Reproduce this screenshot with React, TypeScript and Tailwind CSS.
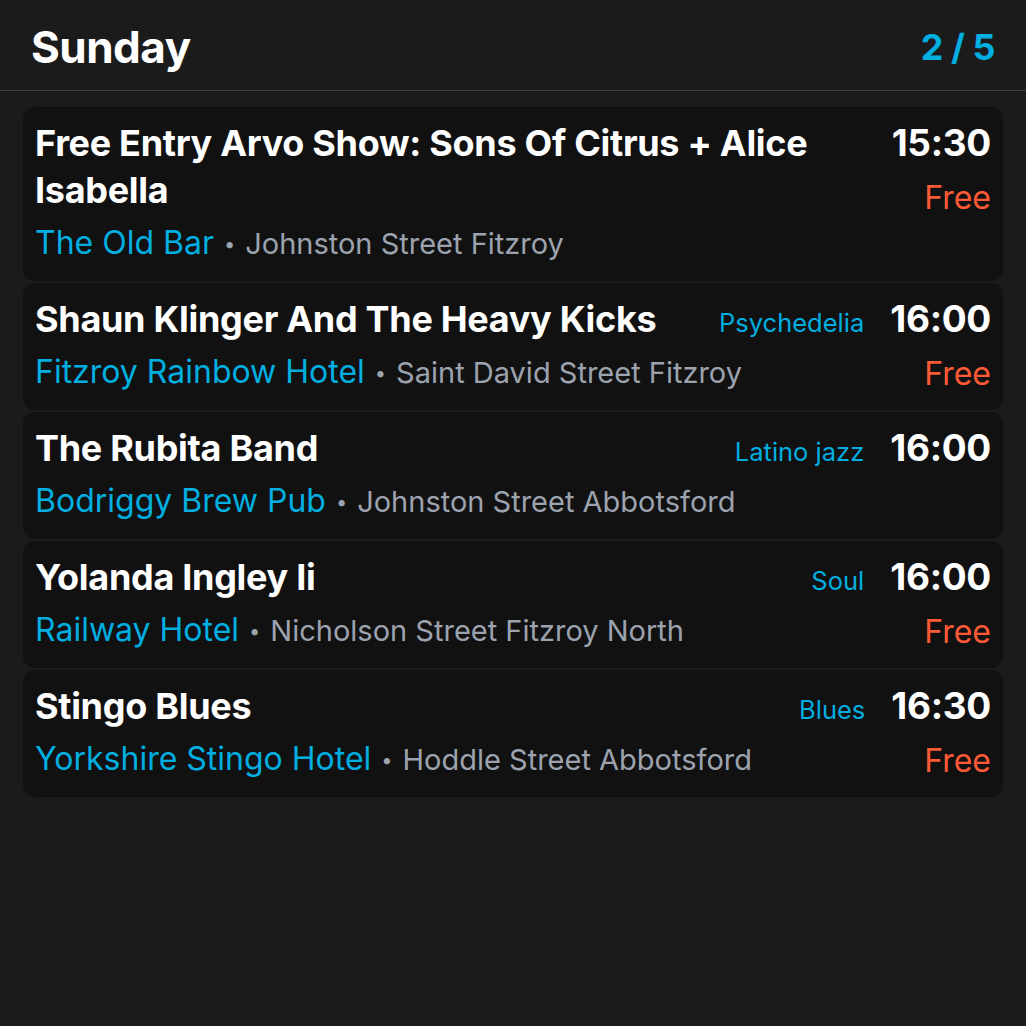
import React from "react";

type Gig = {
  title: string;
  genre?: string;
  time: string;
  venue: string;
  address: string;
  free?: boolean;
};

const gigs: Gig[] = [
  {
    title: "Free Entry Arvo Show: Sons Of Citrus + Alice Isabella",
    time: "15:30",
    venue: "The Old Bar",
    address: "Johnston Street Fitzroy",
    free: true,
  },
  {
    title: "Shaun Klinger And The Heavy Kicks",
    genre: "Psychedelia",
    time: "16:00",
    venue: "Fitzroy Rainbow Hotel",
    address: "Saint David Street Fitzroy",
    free: true,
  },
  {
    title: "The Rubita Band",
    genre: "Latino jazz",
    time: "16:00",
    venue: "Bodriggy Brew Pub",
    address: "Johnston Street Abbotsford",
  },
  {
    title: "Yolanda Ingley Ii",
    genre: "Soul",
    time: "16:00",
    venue: "Railway Hotel",
    address: "Nicholson Street Fitzroy North",
    free: true,
  },
  {
    title: "Stingo Blues",
    genre: "Blues",
    time: "16:30",
    venue: "Yorkshire Stingo Hotel",
    address: "Hoddle Street Abbotsford",
    free: true,
  },
];

export default function App() {
  return (
    <div
      className="w-[1026px] h-[1026px] bg-[#1b1b1b] text-white overflow-hidden"
      style={{ fontFamily: "Inter, 'Noto Sans', sans-serif" }}
    >
      <div className="h-[91px] flex items-center justify-between px-[31px] pt-[4px] border-b border-[#3a404c]">
        <div className="text-[44px] font-bold tracking-[-0.5px] leading-none">Sunday</div>
        <div className="text-[36px] font-bold text-[#00aee0] leading-none tracking-[-0.5px]">2 / 5</div>
      </div>
      <div className="flex flex-col gap-[2px] px-[23px] pt-[16px]">
        {gigs.map((g, i) => (
          <div
            key={i}
            className="flex items-baseline bg-[#111111] rounded-[12px] px-[12px] pt-[12px] pb-[16px]"
          >
            <div className="flex-1 min-w-0">
              <div className="flex items-baseline justify-between gap-4">
                <div className="text-[36px] font-bold leading-[47px] tracking-[-0.3px]">
                  {g.title}
                </div>
                {g.genre && (
                  <div className="text-[25.5px] leading-none text-[#00aee0] whitespace-nowrap">{g.genre}</div>
                )}
              </div>
              <div className="mt-[6px] text-[32px] leading-[45px] whitespace-nowrap">
                <span className="text-[#00aee0]">{g.venue}</span>
                <span className="mx-[10px] text-[20px] leading-none text-[#9ca3af] relative top-[-3px]">•</span>
                <span className="text-[29px] leading-none text-[#9ca3af]">{g.address}</span>
              </div>
            </div>
            <div className="ml-[26px] flex flex-col items-end">
              <div className="text-[37px] font-bold leading-[47px] tracking-[-0.3px]">{g.time}</div>
              {g.free && (
                <div className="text-[32px] text-[#ff5a36] leading-[39px] mt-[12px]">Free</div>
              )}
            </div>
          </div>
        ))}
      </div>
    </div>
  );
}
